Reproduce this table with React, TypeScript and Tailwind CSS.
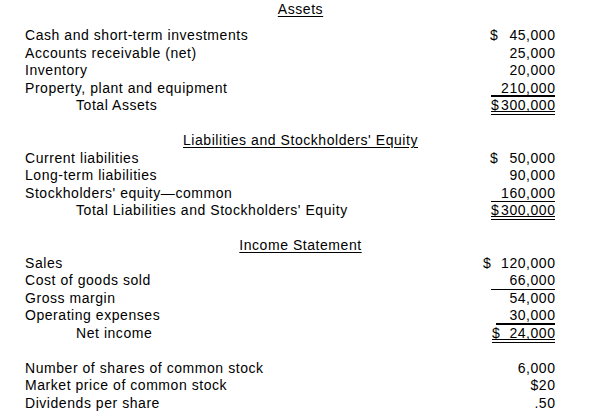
import React from "react";

const Label = ({ text, indent }: { text: string; indent?: boolean }) => (
  <div className={indent ? "pl-[76px]" : "pl-[25px]"}>{text}</div>
);

const Num = ({
  dollar,
  value,
  w,
  line,
}: {
  dollar?: boolean;
  value: string;
  w?: string;
  line?: "single" | "thick" | "double" | "none";
}) => {
  const border =
    line === "single"
      ? "h-[17.5px] border-b border-black"
      : line === "thick"
      ? "h-[17.5px] border-b-2 border-black"
      : line === "double"
      ? "h-[18px] border-b-[4px] border-double border-black"
      : "h-[17.5px]";
  return (
    <div className={`flex justify-between ${w ?? ""} ${border}`}>
      {dollar ? <span>$</span> : <span />}
      <span className="mr-[-0.55px]">{value}</span>
    </div>
  );
};

const Line = ({
  label,
  indent,
  children,
}: {
  label: string;
  indent?: boolean;
  children?: React.ReactNode;
}) => (
  <div className="flex h-[17.5px] justify-between">
    <Label text={label} indent={indent} />
    <div className="pr-[45px] flex justify-end">{children}</div>
  </div>
);

const Header = ({ text }: { text: string }) => (
  <div className="h-[17.5px] flex justify-center pl-[1px]">
    <span className="underline underline-offset-[2px]">{text}</span>
  </div>
);

export default function App() {
  return (
    <div className="w-[600px] h-[412px] pt-[1px] bg-white text-black font-['Liberation_Sans',Arial,sans-serif] text-[14px] leading-[17.5px] tracking-[0.55px] overflow-hidden">
      <Header text="Assets" />
      <div className="h-[8.5px]" />
      <Line label="Cash and short-term investments">
        <Num dollar value="45,000" w="w-[65px]" />
      </Line>
      <Line label="Accounts receivable (net)">
        <Num value="25,000" />
      </Line>
      <Line label="Inventory">
        <Num value="20,000" />
      </Line>
      <Line label="Property, plant and equipment">
        <Num value="210,000" w="w-[64px]" line="thick" />
      </Line>
      <Line label="Total Assets" indent>
        <Num dollar value="300,000" w="w-[64px]" line="double" />
      </Line>

      <div className="h-[17.5px]" />
      <Header text="Liabilities and Stockholders' Equity" />
      <Line label="Current liabilities">
        <Num dollar value="50,000" w="w-[65px]" />
      </Line>
      <Line label="Long-term liabilities">
        <Num value="90,000" />
      </Line>
      <Line label="Stockholders' equity—common">
        <Num value="160,000" w="w-[64px]" line="single" />
      </Line>
      <Line label="Total Liabilities and Stockholders' Equity" indent>
        <Num dollar value="300,000" w="w-[64px]" line="double" />
      </Line>

      <div className="h-[17.5px]" />
      <Header text="Income Statement" />
      <Line label="Sales">
        <Num dollar value="120,000" w="w-[72px]" />
      </Line>
      <Line label="Cost of goods sold">
        <Num value="66,000" w="w-[64px]" line="single" />
      </Line>
      <Line label="Gross margin">
        <Num value="54,000" />
      </Line>
      <Line label="Operating expenses">
        <Num value="30,000" w="w-[59px]" line="thick" />
      </Line>
      <Line label="Net income" indent>
        <Num dollar value="24,000" w="w-[63px]" line="double" />
      </Line>

      <div className="h-[17.5px]" />
      <Line label="Number of shares of common stock">
        <Num value="6,000" />
      </Line>
      <Line label="Market price of common stock">
        <Num value="$20" />
      </Line>
      <Line label="Dividends per share">
        <Num value=".50" />
      </Line>
    </div>
  );
}
